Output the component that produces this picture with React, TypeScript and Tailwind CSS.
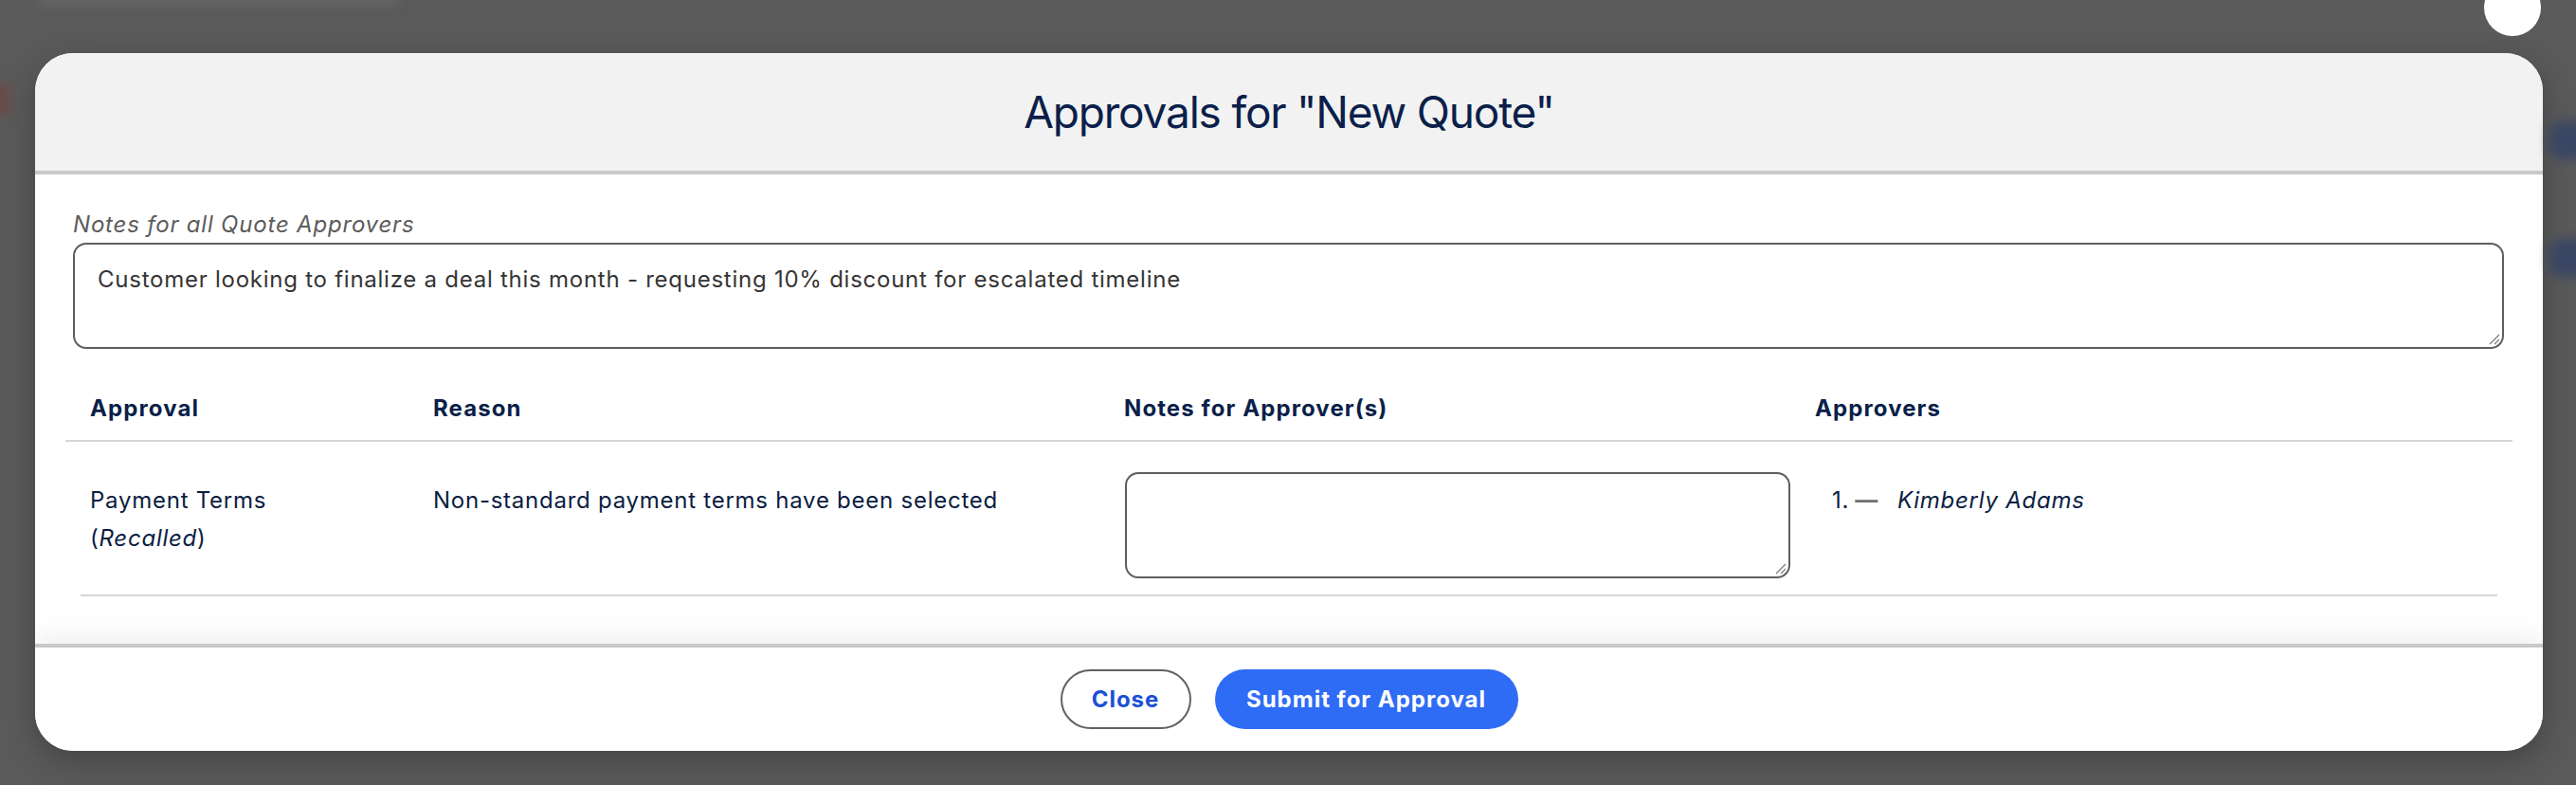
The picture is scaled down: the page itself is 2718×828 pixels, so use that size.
import React from "react";

const font = { fontFamily: "Inter, 'Noto Sans', sans-serif" };

const columns = ["Approval", "Reason", "Notes for Approver(s)", "Approvers"];

export default function App() {
  return (
    <div
      className="relative w-[2718px] h-[828px] overflow-hidden bg-[#5a5a5a]"
      style={font}
    >
      {/* ── Blurred page behind the overlay ───────────────── */}
      <div className="absolute left-[2690px] top-[128px] h-[40px] w-[80px] rounded-[12px] bg-[#3a4663] blur-[6px]" />
      <div className="absolute left-[2690px] top-[252px] h-[40px] w-[80px] rounded-[12px] bg-[#3a4663] blur-[6px]" />
      <div className="absolute left-[-20px] top-[88px] h-[34px] w-[30px] bg-[#6a4a4a] blur-[6px]" />
      <div className="absolute left-[40px] top-[-4px] h-[10px] w-[380px] bg-[#666666] blur-[4px]" />

      {/* ── Close dot ─────────────────────────────────────── */}
      <div className="absolute left-[2621px] top-[-22px] h-[60px] w-[60px] rounded-full bg-white" />

      {/* ── Modal ─────────────────────────────────────────── */}
      <div className="ml-[37px] mt-[56px] flex h-[736px] w-[2646px] flex-col overflow-hidden rounded-[40px] bg-white shadow-[0_10px_30px_rgba(0,0,0,0.25)]">
        <header className="flex h-[128px] shrink-0 items-center justify-center border-b-4 border-[#c9c9c9] bg-[#f2f2f2]">
          <h1 className="text-[46px] font-normal tracking-[-1.2px] text-[#0b1f4a]">
            Approvals for "New Quote"
          </h1>
        </header>

        <div className="flex-1 overflow-hidden pt-[39px]">
          <div className="px-[40px] pr-[41px]">
            <p className="text-[24px] leading-[28px] italic tracking-[0.8px] text-[#5c5c5c]">
              Notes for all Quote Approvers
            </p>
            <div className="relative mt-[5px] h-[112px] rounded-[14px] border-2 border-[#5e5e5e] px-[24px] pt-[21px]">
              <p className="text-[24px] leading-[32px] tracking-[0.75px] text-[#353535]">
                Customer looking to finalize a deal this month - requesting 10%
                discount for escalated timeline
              </p>
              <ResizeGrip />
            </div>
          </div>

          {/* ── Approvals table ─────────────────────────────── */}
          <div className="mx-[32px] mt-[47px]">
            <div className="grid grid-cols-[362px_729px_729px_1fr] border-b-2 border-[#d6d6d6] pb-[17px]">
              {columns.map((c) => (
                <div
                  key={c}
                  className="pl-[26px] text-[24px] leading-[32px] font-bold tracking-[1.1px] text-[#0b1f4a]"
                >
                  {c}
                </div>
              ))}
            </div>

            <div className="grid grid-cols-[362px_729px_729px_1fr] pt-[32px] pb-[17px] tracking-[0.75px]">
              <div className="pl-[26px] pt-[10px] text-[24px] leading-[40px] text-[#0b1d42]">
                Payment Terms
                <br />(<span className="italic">Recalled</span>)
              </div>
              <div className="pl-[26px] pt-[10px] text-[24px] leading-[40px] text-[#0b1d42]">
                Non-standard payment terms have been selected
              </div>
              <div className="pl-[27px]">
                <div className="relative h-[112px] rounded-[14px] border-2 border-[#5e5e5e]">
                  <ResizeGrip />
                </div>
              </div>
              <div className="flex items-baseline pl-[44px] pt-[10px] text-[24px] leading-[40px] text-[#0b1d42]">
                <span>1.</span>
                <span className="ml-[6px] font-bold text-[#6f6f6f]">—</span>
                <span className="ml-[20px] italic">Kimberly Adams</span>
              </div>
            </div>
            <div className="mx-[16px] h-[2px] bg-[#d6d6d6]" />
          </div>
        </div>

        {/* ── Footer ─────────────────────────────────────── */}
        <footer className="flex h-[113px] shrink-0 items-center justify-center gap-[25px] border-t-4 border-[#c9c9c9] bg-white shadow-[0_-12px_22px_rgba(0,0,0,0.05)]">
          <button className="flex h-[63px] w-[138px] items-center justify-center rounded-full border-2 border-[#626262] bg-white text-[24px] font-bold tracking-[1px] text-[#1c50d6]">
            Close
          </button>
          <button className="flex h-[63px] w-[320px] items-center justify-center rounded-full bg-[#2f6cf5] text-[24px] font-bold tracking-[1px] text-white">
            Submit for Approval
          </button>
        </footer>
      </div>
    </div>
  );
}

function ResizeGrip() {
  return (
    <svg
      className="absolute bottom-[2px] right-[2px]"
      width="14"
      height="14"
      viewBox="0 0 14 14"
    >
      <path d="M13 3 L3 13 M13 8 L8 13" stroke="#7a7a7a" strokeWidth="1.2" />
    </svg>
  );
}
